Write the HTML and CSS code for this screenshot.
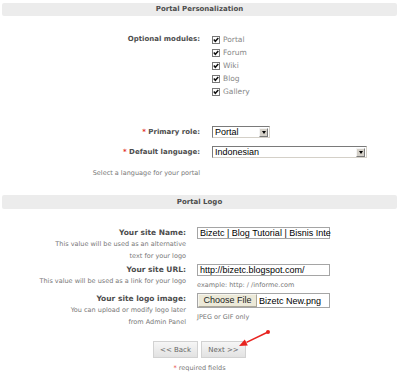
FILE: index.html
```html
<!DOCTYPE html>
<html lang="en">
<head>
    <meta charset="UTF-8">
    <meta name="viewport" content="width=device-width, initial-scale=1.0">
    <title>Portal Setup</title>
    <link rel="stylesheet" href="styles.css">
</head>
<body>
    <form class="wizard">
        <div class="section-title">Portal Personalization</div>

        <div class="row row-modules">
            <div class="label">Optional modules:</div>
            <ul class="modules">
                <li><span class="check"><svg width="8" height="8" viewBox="0 0 8 8"><rect x=".5" y=".5" width="7" height="7" fill="#fff" stroke="#777"/><path d="M1.8 3.6 L3.3 5.3 L6.3 1.9" fill="none" stroke="#111" stroke-width="1.5"/></svg></span>Portal</li>
                <li><span class="check"><svg width="8" height="8" viewBox="0 0 8 8"><rect x=".5" y=".5" width="7" height="7" fill="#fff" stroke="#777"/><path d="M1.8 3.6 L3.3 5.3 L6.3 1.9" fill="none" stroke="#111" stroke-width="1.5"/></svg></span>Forum</li>
                <li><span class="check"><svg width="8" height="8" viewBox="0 0 8 8"><rect x=".5" y=".5" width="7" height="7" fill="#fff" stroke="#777"/><path d="M1.8 3.6 L3.3 5.3 L6.3 1.9" fill="none" stroke="#111" stroke-width="1.5"/></svg></span>Wiki</li>
                <li><span class="check"><svg width="8" height="8" viewBox="0 0 8 8"><rect x=".5" y=".5" width="7" height="7" fill="#fff" stroke="#777"/><path d="M1.8 3.6 L3.3 5.3 L6.3 1.9" fill="none" stroke="#111" stroke-width="1.5"/></svg></span>Blog</li>
                <li><span class="check"><svg width="8" height="8" viewBox="0 0 8 8"><rect x=".5" y=".5" width="7" height="7" fill="#fff" stroke="#777"/><path d="M1.8 3.6 L3.3 5.3 L6.3 1.9" fill="none" stroke="#111" stroke-width="1.5"/></svg></span>Gallery</li>
            </ul>
        </div>

        <div class="row row-role">
            <div class="label"><span class="req">*</span> Primary role:</div>
            <div class="select select-role"><span>Portal</span><span class="arrow"></span></div>
        </div>

        <div class="row row-lang">
            <div>
                <div class="label"><span class="req">*</span> Default language:</div>
                <div class="desc hint">Select a language for your portal</div>
            </div>
            <div class="select select-lang"><span>Indonesian</span><span class="arrow"></span></div>
        </div>

        <div class="section-title section-logo">Portal Logo</div>

        <div class="row2 row-name">
            <div>
                <div class="label">Your site Name:</div>
                <div class="desc">This value will be used as an alternative<br>text for your logo</div>
            </div>
            <div class="field"><div class="input">Bizetc | Blog Tutorial | Bisnis Inte</div></div>
        </div>

        <div class="row2 row-url">
            <div>
                <div class="label">Your site URL:</div>
                <div class="desc">This value will be used as a link for your logo</div>
            </div>
            <div class="field">
                <div class="input">http://bizetc.blogspot.com/</div>
                <div class="note note-url">example: http: / /informe.com</div>
            </div>
        </div>

        <div class="row2 row-image">
            <div>
                <div class="label">Your site logo image:</div>
                <div class="desc">You can upload or modify logo later<br>from Admin Panel</div>
            </div>
            <div class="field">
                <div class="file"><span class="file-btn">Choose File</span><span class="file-name">Bizetc New.png</span></div>
                <div class="note note-file">JPEG or GIF only</div>
            </div>
        </div>

        <div class="actions">
            <button type="button" class="btn">&lt;&lt; Back</button>
            <button type="button" class="btn">Next &gt;&gt;</button>
        </div>
        <p class="required"><span class="req">*</span> required fields</p>
    </form>

    <!-- annotation arrow pointing at Next -->
    <svg class="pointer" width="36" height="22" viewBox="0 0 36 22">
        <line x1="32" y1="4" x2="10.5" y2="14.4" stroke="#e8231f" stroke-width="1.6"/>
        <circle cx="32" cy="4" r="2" fill="#e8231f"/>
        <polygon points="3,18 11.8,17.4 8.8,11.6" fill="#e8231f"/>
    </svg>
</body>
</html>
```

FILE: styles.css
```css
body {
    margin: 0;
    padding: 3px 3px 0 2px;
    font-family: "DejaVu Sans", Verdana, sans-serif;
    color: #555;
    background: #fff;
    position: relative;
}
.section-title {
    background: #ececec;
    border-radius: 2px;
    height: 13px;
    line-height: 13px;
    text-align: center;
    font-size: 7px;
    font-weight: bold;
    color: #4d4d4d;
}
.section-logo {
    margin-top: 17px;
    height: 14px;
    line-height: 14px;
}
.row {
    display: grid;
    grid-template-columns: 198px 1fr;
    column-gap: 12px;
    align-items: start;
}
.row2 {
    display: grid;
    grid-template-columns: 184px 1fr;
    column-gap: 11px;
    align-items: start;
}
.label {
    text-align: right;
    font-size: 7px;
    font-weight: bold;
    color: #4d4d4d;
    line-height: 12px;
}
.req {
    color: #e3302a;
}
.desc {
    text-align: right;
    font-size: 6.5px;
    color: #777;
    line-height: 12px;
}
.row-modules {
    margin-top: 17px;
}
.row-modules .label {
    line-height: 13px;
}
.modules {
    list-style: none;
    margin: 0;
    padding: 0;
}
.modules li {
    display: flex;
    align-items: center;
    height: 13px;
    font-size: 7.5px;
    color: #888;
}
.check {
    display: flex;
    width: 8px;
    height: 8px;
    margin-right: 3px;
}
.row-role {
    margin-top: 28px;
}
.row-lang {
    margin-top: 8px;
}
.hint {
    margin-top: 10px;
    line-height: 10px;
}
.select {
    display: flex;
    align-items: center;
    justify-content: space-between;
    box-sizing: border-box;
    height: 12px;
    border: 1px solid;
    border-color: #7a7a7a #d4d0c8 #d4d0c8 #7a7a7a;
    background: #fff;
    font-family: "Liberation Sans", Arial, sans-serif;
    font-size: 9px;
    color: #000;
    padding-left: 2px;
}
.select-role {
    width: 58px;
}
.select-lang {
    width: 155px;
}
.arrow {
    box-sizing: border-box;
    width: 9px;
    height: 9px;
    margin-right: 1px;
    background: #d4d0c8;
    border: 1px solid;
    border-color: #f4f4f4 #7a7a7a #7a7a7a #f4f4f4;
    display: flex;
    align-items: center;
    justify-content: center;
}
.arrow::after {
    content: "";
    border-left: 2.5px solid transparent;
    border-right: 2.5px solid transparent;
    border-top: 3px solid #000;
}
.row-name {
    margin-top: 18px;
}
.row-name .label,
.row-url .label,
.row-image .label {
    line-height: 11px;
    font-size: 7.5px;
}
.row-url {
    margin-top: 2px;
}
.row-image {
    margin-top: 3px;
}
.input {
    box-sizing: border-box;
    width: 133px;
    height: 12px;
    border: 1px solid #a5a5a5;
    padding: 0 2px;
    font-family: "Liberation Sans", Arial, sans-serif;
    font-size: 9px;
    line-height: 10px;
    color: #000;
    white-space: nowrap;
}
.note {
    font-size: 6.5px;
    color: #777;
    line-height: 10px;
}
.note-url {
    margin-top: 4px;
}
.note-file {
    margin-top: 4px;
}
.file {
    box-sizing: border-box;
    width: 133px;
    height: 15px;
    border: 1px solid #a5a5a5;
    display: flex;
    align-items: center;
    font-family: "Liberation Sans", Arial, sans-serif;
    font-size: 9px;
    color: #000;
}
.file-btn {
    box-sizing: border-box;
    height: 13px;
    width: 59px;
    line-height: 11px;
    text-align: center;
    background: #ece9d8;
    border: 1px solid;
    border-color: #f6f5ee #aca899 #aca899 #f6f5ee;
    color: #222;
}
.file-name {
    margin-left: 2px;
}
.actions {
    margin-top: 13px;
    display: flex;
    justify-content: center;
    gap: 3px;
}
.btn {
    box-sizing: border-box;
    width: 45px;
    height: 17px;
    padding: 0;
    background: linear-gradient(#f6f6f6, #e2e2e2);
    border: 1px solid #d2d2d2;
    font-family: "DejaVu Sans", Verdana, sans-serif;
    font-size: 7px;
    color: #666;
}
.required {
    margin: 5px 0 0;
    text-align: center;
    font-size: 6.5px;
    line-height: 10px;
    color: #777;
}
.pointer {
    position: absolute;
    left: 236px;
    top: 328px;
}
```
